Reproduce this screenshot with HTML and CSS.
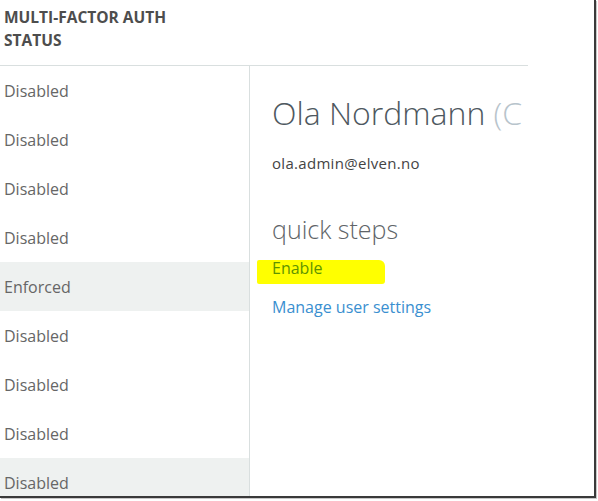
FILE: index.html
```html
<!DOCTYPE html>
<html>
<head>
<meta charset="utf-8">
<link rel="stylesheet" href="styles.css">
</head>
<body>
<div class="frame">
  <div class="header">
    <div class="col-title">MULTI-FACTOR AUTH<br>STATUS</div>
  </div>
  <div class="main">
    <div class="list">
      <div class="row">Disabled</div>
      <div class="row">Disabled</div>
      <div class="row">Disabled</div>
      <div class="row">Disabled</div>
      <div class="row selected">Enforced</div>
      <div class="row">Disabled</div>
      <div class="row">Disabled</div>
      <div class="row">Disabled</div>
      <div class="row selected">Disabled</div>
    </div>
    <div class="detail">
      <div class="name">Ola Nordmann <span class="fade">(C</span></div>
      <div class="email">ola.admin@elven.no</div>
      <div class="section">quick steps</div>
      <div class="link enable"><span class="hl"></span><span class="txt">Enable</span></div>
      <div class="link">Manage user settings</div>
    </div>
  </div>
</div>
</body>
</html>
```
FILE: styles.css
```css
html, body {
  margin: 0;
  padding: 0;
  background: #ffffff;
}
body {
  font-family: "Open Sans", "Noto Sans", sans-serif;
  width: 598px;
  height: 501px;
  overflow: hidden;
}
.frame {
  width: 594px;
  height: 496px;
  border-right: 2px solid #3a3a3a;
  border-bottom: 2px solid #3a3a3a;
  box-shadow: 1px 1px 0 #c8c8c8;
  overflow: hidden;
  box-sizing: content-box;
}
.header {
  width: 528px;
  height: 66px;
  border-bottom: 1px solid #d9dfdf;
  box-sizing: border-box;
}
.col-title {
  padding: 6px 0 0 4px;
  font-size: 15.5px;
  font-weight: 700;
  line-height: 23px;
  color: #4d4d4d;
}
.main {
  display: flex;
  height: 430px;
}
.list {
  width: 249px;
  border-right: 1px solid #d9dfdf;
  flex: none;
}
.row {
  height: 49px;
  display: flex;
  align-items: center;
  padding-left: 4px;
  font-size: 16px;
  color: #666666;
}
.row.selected {
  background: #eef1f0;
}
.detail {
  width: 256px;
  padding-left: 22px;
  overflow: hidden;
  white-space: nowrap;
}
.name {
  margin-top: 27px;
  font-size: 32px;
  font-weight: 300;
  line-height: 40px;
  color: #4e5860;
}
.fade {
  color: #b8c4cc;
}
.email {
  margin-top: 20px;
  font-size: 15px;
  letter-spacing: 0.3px;
  line-height: 20px;
  color: #444444;
}
.section {
  margin-top: 40px;
  font-size: 25px;
  font-weight: 300;
  line-height: 32px;
  color: #606468;
}
.link {
  font-size: 16px;
  line-height: 22px;
  color: #3a8fd0;
}
.enable {
  position: relative;
  margin-top: 12px;
  color: #5e9400;
}
.enable .txt {
  position: relative;
}
.hl {
  position: absolute;
  left: -15px;
  top: 3px;
  width: 128px;
  height: 24px;
  background: #ffff00;
  border-radius: 2px 6px 3px 2px;
}
.link + .link {
  margin-top: 17px;
}
```
